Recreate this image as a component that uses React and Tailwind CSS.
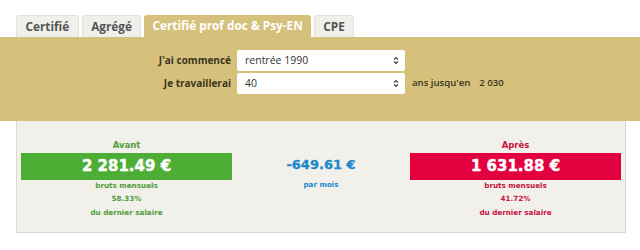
import React from "react";

const tabFont = { fontFamily: '"Open Sans", "DejaVu Sans", sans-serif' };

function Chevrons() {
  return (
    <svg width="6" height="9" viewBox="0 0 6 9" className="shrink-0">
      <path d="M1 3.5 L3 1.5 L5 3.5" fill="none" stroke="#444" strokeWidth="1.2" />
      <path d="M1 5.5 L3 7.5 L5 5.5" fill="none" stroke="#444" strokeWidth="1.2" />
    </svg>
  );
}

function Select({ value }) {
  return (
    <div className="w-[168px] h-[21px] bg-white rounded-[2px] flex items-center justify-between pl-[8px] pr-[6px] text-[10.5px] font-medium text-[#333]">
      <span>{value}</span>
      <Chevrons />
    </div>
  );
}

function Side({ title, amount, pct, bg, fg }) {
  return (
    <div className="flex flex-col items-center" style={{ fontFamily: '"DejaVu Sans", Verdana, sans-serif' }}>
      <div className={`text-[8.5px] font-bold h-[12px] leading-[12px] ${fg}`}>{title}</div>
      <div className={`w-full h-[27px] mt-[2px] flex items-center justify-center text-white text-[15px] font-bold [-webkit-text-stroke:0.4px_#fff] ${bg}`}>
        {amount}
      </div>
      <div className={`text-[7.2px] font-bold leading-[12px] ${fg}`}>bruts mensuels</div>
      <div className={`text-[7.2px] font-bold leading-[13px] ${fg}`}>{pct}</div>
      <div className={`text-[7.2px] font-bold leading-[16px] ${fg}`}>du dernier salaire</div>
    </div>
  );
}

export default function App() {
  const tabs = ["Certifié", "Agrégé", "Certifié prof doc & Psy-EN", "CPE"];
  return (
    <div className="w-[640px] h-[250px] bg-white overflow-hidden" style={tabFont}>
      <div className="flex gap-[3px] pl-[16px] pt-[15px]">
        {tabs.map((t, i) =>
          i === 2 ? (
            <div key={t} className="h-[22px] px-[8px] flex items-center bg-[#d5c17c] text-white text-[11.8px] font-bold rounded-t-[3px]">
              {t}
            </div>
          ) : (
            <div key={t} className="h-[22px] px-[8.5px] flex items-center bg-[#efefeb] border border-b-0 border-[#e2e1da] text-[#555] text-[11.8px] font-bold rounded-t-[3px]">
              {t}
            </div>
          )
        )}
      </div>
      <div className="bg-[#d5c17c] h-[84px] pt-[13px]">
        <div className="flex flex-col gap-[2px]">
          <div className="flex items-center">
            <div className="w-[231px] text-right text-[10px] font-bold text-[#3b3520]">J'ai commencé</div>
            <div className="ml-[6px]"><Select value="rentrée 1990" /></div>
          </div>
          <div className="flex items-center">
            <div className="w-[231px] text-right text-[10px] font-bold text-[#3b3520]">Je travaillerai</div>
            <div className="ml-[6px]"><Select value="40" /></div>
            <div className="ml-[7px] text-[9.6px] font-semibold text-[#3b3520]">ans jusqu'en</div>
            <div className="ml-[9px] text-[9.6px] font-semibold text-[#3b3520]">2 030</div>
          </div>
        </div>
      </div>
      <div className="mx-[16px] w-[610px] h-[112px] bg-[#f1f0eb] border border-t-0 border-[#dcdacf] px-[4px] pt-[18px] grid grid-cols-[211px_178px_211px]">
        <Side title="Avant" amount="2 281.49 €" pct="58.33%" bg="bg-[#4dae36]" fg="text-[#4f9e3a]" />
        <div className="flex flex-col items-center pt-[18px]" style={{ fontFamily: '"DejaVu Sans", Verdana, sans-serif' }}>
          <div className="text-[13px] font-bold text-[#1c88cc] leading-[16px] [-webkit-text-stroke:0.3px_#1c88cc]">-649.61 €</div>
          <div className="text-[7.2px] font-bold text-[#1c88cc] mt-[7px]">par mois</div>
        </div>
        <Side title="Après" amount="1 631.88 €" pct="41.72%" bg="bg-[#e3003f]" fg="text-[#c8133f]" />
      </div>
    </div>
  );
}
